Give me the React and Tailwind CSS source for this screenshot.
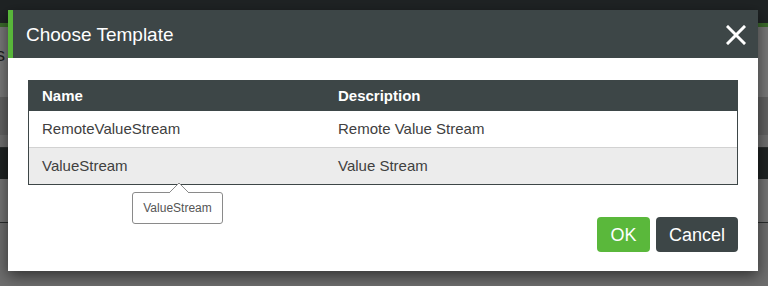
import React from "react";

export default function App() {
  const font = { fontFamily: '"Liberation Sans", Arial, sans-serif' };
  return (
    <div className="relative w-[768px] h-[286px] overflow-hidden bg-[#747474]" style={font}>
      {/* background page (dimmed) */}
      <div className="flex flex-col w-full">
        <div className="h-[23px] bg-[#1f2324]" />
        <div className="h-[4px] bg-[#3b6a2b]" />
        <div className="h-[70px] bg-[#787878] relative">
          <span className="absolute left-[-4px] top-[19px] text-[18px] leading-none text-[#1e1e1e]">s</span>
        </div>
        <div className="h-[38px] bg-[#626262]" />
        <div className="h-[12px] bg-[#6f6f6f]" />
        <div className="h-[1px] bg-[#2a2d2d]" />
        <div className="h-[31px] bg-[#1f2323]" />
        <div className="h-[43px] bg-[#747474]" />
        <div className="h-[1px] bg-[#2a2d2d]" />
        <div className="h-[63px] bg-[#6e6e6e]" />
      </div>

      {/* modal */}
      <div className="absolute left-[8px] top-[10px] w-[750px] h-[261px] bg-white flex flex-col shadow-[0_5px_14px_rgba(0,0,0,0.55)]">
        <div className="h-[48px] flex items-center justify-between bg-[#3d4647] border-l-[5px] border-[#58b63a] pl-[13px] pr-[12px]">
          <span className="text-white text-[19px] leading-none">Choose Template</span>
          <svg width="20" height="20" viewBox="0 0 20 20" className="mt-[1px]">
            <path d="M2 2 L18 18 M18 2 L2 18" stroke="white" strokeWidth="3" strokeLinecap="square" fill="none" />
          </svg>
        </div>

        <div className="flex flex-col px-[20px] pt-[22px]">
          <div className="border border-[#3d4647] flex flex-col">
            <div className="h-[30px] bg-[#3d4647] flex items-center text-white font-bold text-[15px]">
              <div className="w-[296px] pl-[13px]">Name</div>
              <div className="flex-1 pl-[13px]">Description</div>
            </div>
            <div className="h-[37px] bg-white flex items-center text-[#404040] text-[15px] border-b border-[#d2d2d2]">
              <div className="w-[296px] pl-[13px]">RemoteValueStream</div>
              <div className="flex-1 pl-[13px]">Remote Value Stream</div>
            </div>
            <div className="h-[36px] bg-[#ececec] flex items-center text-[#404040] text-[15px]">
              <div className="w-[296px] pl-[13px]">ValueStream</div>
              <div className="flex-1 pl-[13px]">Value Stream</div>
            </div>
          </div>

          <div className="flex justify-end gap-[6px] mt-[32px]">
            <button className="w-[53px] h-[35px] rounded-[4px] bg-[#5ab83b] text-white text-[18px] leading-none">OK</button>
            <button className="w-[82px] h-[35px] rounded-[4px] bg-[#3d4647] text-white text-[18px] leading-none">Cancel</button>
          </div>
        </div>

        {/* tooltip */}
        <div className="absolute left-[124px] top-[182px] w-[91px] h-[32px] bg-white border border-[#8a8a8a] rounded-[3px] flex items-center justify-center text-[12px] text-[#555]">
          ValueStream
          <svg width="20" height="11" viewBox="0 0 20 11" className="absolute left-[36px] top-[-11px]">
            <path d="M0 11 L10 1 L20 11" fill="white" stroke="#8a8a8a" strokeWidth="1" />
            <path d="M1 11.5 L19 11.5" stroke="white" strokeWidth="2" />
          </svg>
        </div>
      </div>
    </div>
  );
}
